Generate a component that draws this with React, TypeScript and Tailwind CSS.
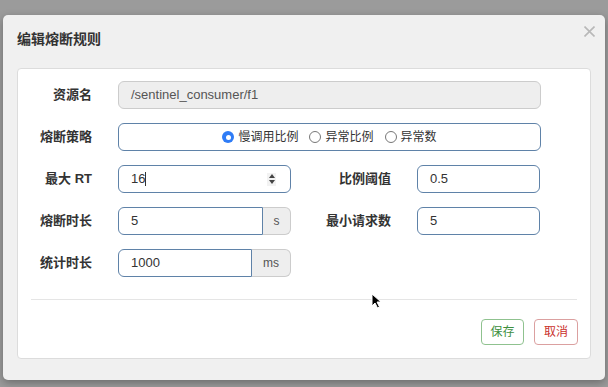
import { ReactNode } from "react";

const font = { fontFamily: '"Liberation Sans", "Noto Sans CJK SC", sans-serif' };

function Label({ children, w }: { children: ReactNode; w: string }) {
	return (
		<div className={`${w} shrink-0 text-right text-[13px] font-bold text-[#333]`}>
			{children}
		</div>
	);
}

function Field({ children, className }: { children: ReactNode; className: string }) {
	return (
		<div
			className={`h-[28px] flex items-center px-[12px] text-[13px] text-[#333] border border-[#5f82a8] rounded-[6px] bg-white ${className}`}
		>
			{children}
		</div>
	);
}

function Addon({ input, unit, inputW }: { input: string; unit: string; inputW: string }) {
	return (
		<div className="flex w-[173px] h-[28px]">
			<div
				className={`${inputW} flex items-center px-[12px] text-[13px] text-[#333] border border-[#5f82a8] rounded-l-[6px] bg-white`}
			>
				{input}
			</div>
			<div className="flex-1 flex items-center justify-center text-[12px] text-[#555] bg-[#eee] border border-l-0 border-[#ccc] rounded-r-[6px]">
				{unit}
			</div>
		</div>
	);
}

function Radio({ label, checked }: { label: string; checked?: boolean }) {
	return (
		<div className="flex items-center gap-[4px]">
			{checked ? (
				<span className="w-[12px] h-[12px] rounded-full bg-[#2f7cf6] flex items-center justify-center">
					<span className="w-[5px] h-[5px] rounded-full bg-white" />
				</span>
			) : (
				<span className="w-[12px] h-[12px] rounded-full border border-[#777] bg-white" />
			)}
			<span className="text-[12px] text-[#333]">{label}</span>
		</div>
	);
}

export default function App() {
	return (
		<div className="w-[608px] h-[387px] bg-[#9b9b9b] pt-[15px] px-[3px] relative overflow-hidden" style={font}>
			<div className="h-[365px] bg-[#f0f0f0] rounded-[5px] shadow-[0_3px_9px_rgba(0,0,0,0.3)] px-[14px] relative">
				<div className="pt-[14px] h-[53px] text-[14px] font-bold text-[#333]">编辑熔断规则</div>
				<svg className="absolute right-[10px] top-[11px]" width="11" height="11" viewBox="0 0 11 11">
					<path d="M0.5 0.5L10.5 10.5M10.5 0.5L0.5 10.5" stroke="#b8b8b8" strokeWidth="1.6" />
				</svg>
				<div className="bg-white border border-[#dcdcdc] rounded-[4px] pt-[12px] pb-[13px]">
					<div className="flex flex-col gap-[14px]">
						<div className="flex items-center gap-[26px]">
							<Label w="w-[74px]">资源名</Label>
							<div className="w-[423px] h-[28px] flex items-center px-[12px] text-[13px] text-[#555] bg-[#eee] border border-[#ccc] rounded-[6px]">
								/sentinel_consumer/f1
							</div>
						</div>
						<div className="flex items-center gap-[26px]">
							<Label w="w-[74px]">熔断策略</Label>
							<Field className="w-[423px] justify-center gap-[11px]">
								<Radio label="慢调用比例" checked />
								<Radio label="异常比例" />
								<Radio label="异常数" />
							</Field>
						</div>
						<div className="flex items-center gap-[26px]">
							<Label w="w-[74px]">最大 RT</Label>
							<Field className="w-[173px] justify-between">
								<span className="flex items-center">
									16<span className="w-px h-[14px] bg-[#333]" />
								</span>
								<span className="w-[9px] h-[13px] bg-[#f2f2f2] flex flex-col items-center justify-center gap-[2px] mr-[2px]">
									<svg width="6" height="4" viewBox="0 0 6 4"><path d="M0 4L3 0L6 4Z" fill="#444" /></svg>
									<svg width="6" height="4" viewBox="0 0 6 4"><path d="M0 0L3 4L6 0Z" fill="#444" /></svg>
								</span>
							</Field>
							<Label w="w-[74px]">比例阈值</Label>
							<Field className="w-[123px]">0.5</Field>
						</div>
						<div className="flex items-center gap-[26px]">
							<Label w="w-[74px]">熔断时长</Label>
							<Addon input="5" unit="s" inputW="w-[145px]" />
							<Label w="w-[74px]">最小请求数</Label>
							<Field className="w-[123px]">5</Field>
						</div>
						<div className="flex items-center gap-[26px]">
							<Label w="w-[74px]">统计时长</Label>
							<Addon input="1000" unit="ms" inputW="w-[134px]" />
						</div>
					</div>
					<div className="mx-[13px] mt-[22px] border-t border-[#e5e5e5]" />
					<div className="flex justify-end gap-[10px] mr-[12px] mt-[19px]">
						<button className="w-[43px] h-[26px] text-[12px] text-[#3e8f3e] border border-[#8fc28f] rounded-[4px] bg-white">
							保存
						</button>
						<button className="w-[44px] h-[26px] text-[12px] text-[#c9302c] border border-[#dba0a0] rounded-[4px] bg-white">
							取消
						</button>
					</div>
				</div>
			</div>
			<svg className="absolute left-[371px] top-[293px]" width="11" height="16" viewBox="0 0 11 16">
				<path d="M1 1L1 13L4 10L6.5 15L8.5 14L6 9L10 9Z" fill="#000" stroke="#fff" strokeWidth="1" />
			</svg>
		</div>
	);
}
